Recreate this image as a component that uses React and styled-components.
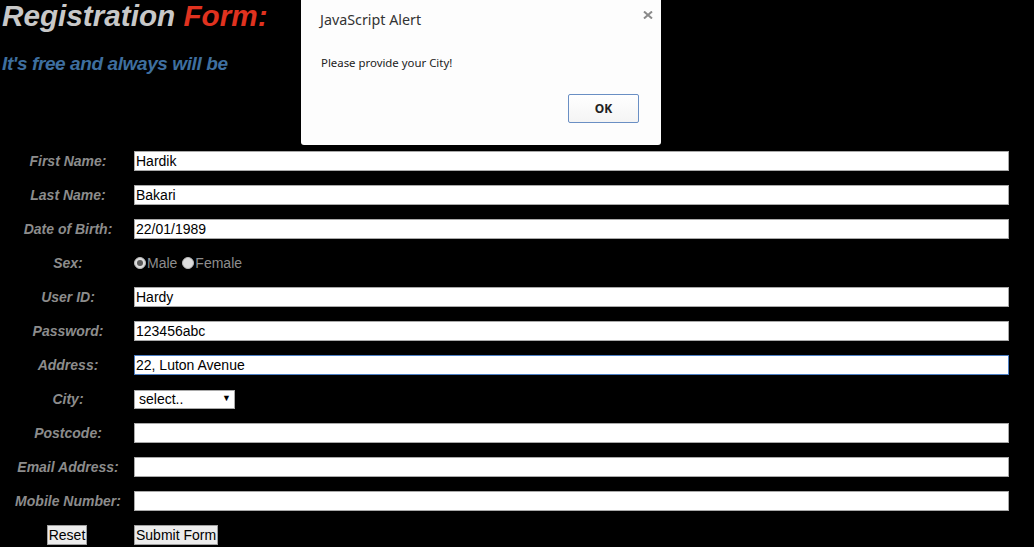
import React from 'react';
import styled, { createGlobalStyle } from 'styled-components';

const GlobalStyle = createGlobalStyle`
html, body { margin:0; padding:0; background:#000; }
body { font-family: "Liberation Sans", Arial, sans-serif; width:1034px; height:547px; overflow:hidden; }
`

const Page = styled.div`
position:relative;
width:1034px;height:547px;
background:#000;
`

const Title = styled.h1`
margin:0;padding-left:2px;
font-size:29.7px;line-height:32px;
font-weight:bold;font-style:italic;
color:#c8c8c8;
`
const Red = styled.span`
color:#e0321f;
`
const Subtitle = styled.h2`
margin:20px 0 0 0;padding-left:2px;
font-size:19px;line-height:24px;
font-weight:bold;font-style:italic;
color:#3e6f9f;
letter-spacing:-0.4px;
`

const Form = styled.form`
margin-top:75px;
display:grid;
grid-template-columns:134px 875px;
row-gap:14px;
align-items:center;
`

const Label = styled.label`
padding-left:2px;
text-align:center;
font-size:14px;font-weight:bold;font-style:italic;
color:#8c8c8c;
line-height:20px;
`

const TextInput = styled.input`
box-sizing:border-box;
width:875px;height:20px;
margin:0;padding:0 1px;
border:1px solid ${p => p.$focus ? '#4d7fc4' : '#a9a9a9'};
outline:none;
background:#fff;
font-family:"Liberation Sans", Arial, sans-serif;
font-size:14px;color:#000;
`

const RadioGroup = styled.div`
display:flex;align-items:center;
height:20px;
font-size:14px;color:#8e8e8e;
`
const Radio = styled.span`
box-sizing:border-box;
width:12px;height:12px;border-radius:50%;
margin-right:1px;
background:#dcdcdc;
border:1px solid #b8b8b8;
display:flex;align-items:center;justify-content:center;
&::after{
  content:'';
  width:6px;height:6px;border-radius:50%;
  background:${p => p.$checked ? '#5a5a5a' : 'transparent'};
}
`
const RadioText = styled.span`
margin-right:5px;
`

const SelectWrap = styled.div`
position:relative;
width:101px;height:19px;
`
const Select = styled.select`
appearance:none;
box-sizing:border-box;
width:101px;height:19px;
margin:0;padding:0 0 0 4px;
border:1px solid #a9a9a9;border-radius:0;
background:#fff;
font-family:"Liberation Sans", Arial, sans-serif;
font-size:14px;color:#000;
`
const Arrow = styled.span`
position:absolute;right:4px;top:3px;
font-size:9px;color:#000;pointer-events:none;
`

const Button = styled.button`
box-sizing:border-box;
height:20px;
margin:0;padding:0 1px;
justify-self:${p => p.$center ? 'center' : 'start'};
border:1px solid #a0a0a0;
background:#ececec;
font-family:"Liberation Sans", Arial, sans-serif;
font-size:14px;color:#000;
line-height:18px;
`

/* the alert box lies over the page */
const Dialog = styled.div`
position:absolute;left:301px;top:0;
width:360px;height:145px;
box-sizing:border-box;
background:#fdfdfd;
border-radius:0 0 3px 3px;
box-shadow:0 1px 4px rgba(0,0,0,0.5);
font-family:"Noto Sans", "Open Sans", sans-serif;
`
const DialogTitle = styled.div`
position:absolute;left:19px;top:10px;
font-size:14.3px;color:#333;
`
const Close = styled.svg`
position:absolute;left:342px;top:11px;
`
const Message = styled.div`
position:absolute;left:20px;top:55px;
font-size:11.4px;color:#222;
`
const OkButton = styled.button`
position:absolute;left:267px;top:94px;
width:71px;height:29px;
box-sizing:border-box;
border:1px solid #6a8fc4;border-radius:2px;
background:linear-gradient(#fff,#f4f4f4);
font-family:"Noto Sans", "Open Sans", sans-serif;
font-size:12px;font-weight:bold;color:#222;
`

const rows = [
  ['First Name:', 'Hardik'],
  ['Last Name:', 'Bakari'],
  ['Date of Birth:', '22/01/1989'],
]
const rows2 = [
  ['User ID:', 'Hardy'],
  ['Password:', '123456abc'],
  ['Address:', '22, Luton Avenue', true],
]
const rows3 = [
  ['Postcode:', ''],
  ['Email Address:', ''],
  ['Mobile Number:', ''],
]

const field = ([label, value, focus]) => (
  <React.Fragment key={label}>
    <Label>{label}</Label>
    <TextInput type="text" defaultValue={value} $focus={focus} readOnly />
  </React.Fragment>
)

const App = () => {
  return (
    <Page>
      <GlobalStyle />
      <Title>Registration <Red>Form:</Red></Title>
      <Subtitle>It's free and always will be</Subtitle>
      <Form onSubmit={e => e.preventDefault()}>
        {rows.map(field)}
        <Label>Sex:</Label>
        <RadioGroup>
          <Radio $checked /><RadioText>Male</RadioText>
          <Radio /><RadioText>Female</RadioText>
        </RadioGroup>
        {rows2.map(field)}
        <Label>City:</Label>
        <SelectWrap>
          <Select defaultValue="">
            <option value="">select..</option>
          </Select>
          <Arrow>▼</Arrow>
        </SelectWrap>
        {rows3.map(field)}
        <Button type="reset" $center>Reset</Button>
        <Button type="submit">Submit Form</Button>
      </Form>
      <Dialog>
        <DialogTitle>JavaScript Alert</DialogTitle>
        <Close width="10" height="8" viewBox="0 0 10 8">
          <path d="M1 0.5 L9 7.5 M9 0.5 L1 7.5" stroke="#8a8a8a" strokeWidth="2" />
        </Close>
        <Message>Please provide your City!</Message>
        <OkButton>OK</OkButton>
      </Dialog>
    </Page>
  )
}

export default App
